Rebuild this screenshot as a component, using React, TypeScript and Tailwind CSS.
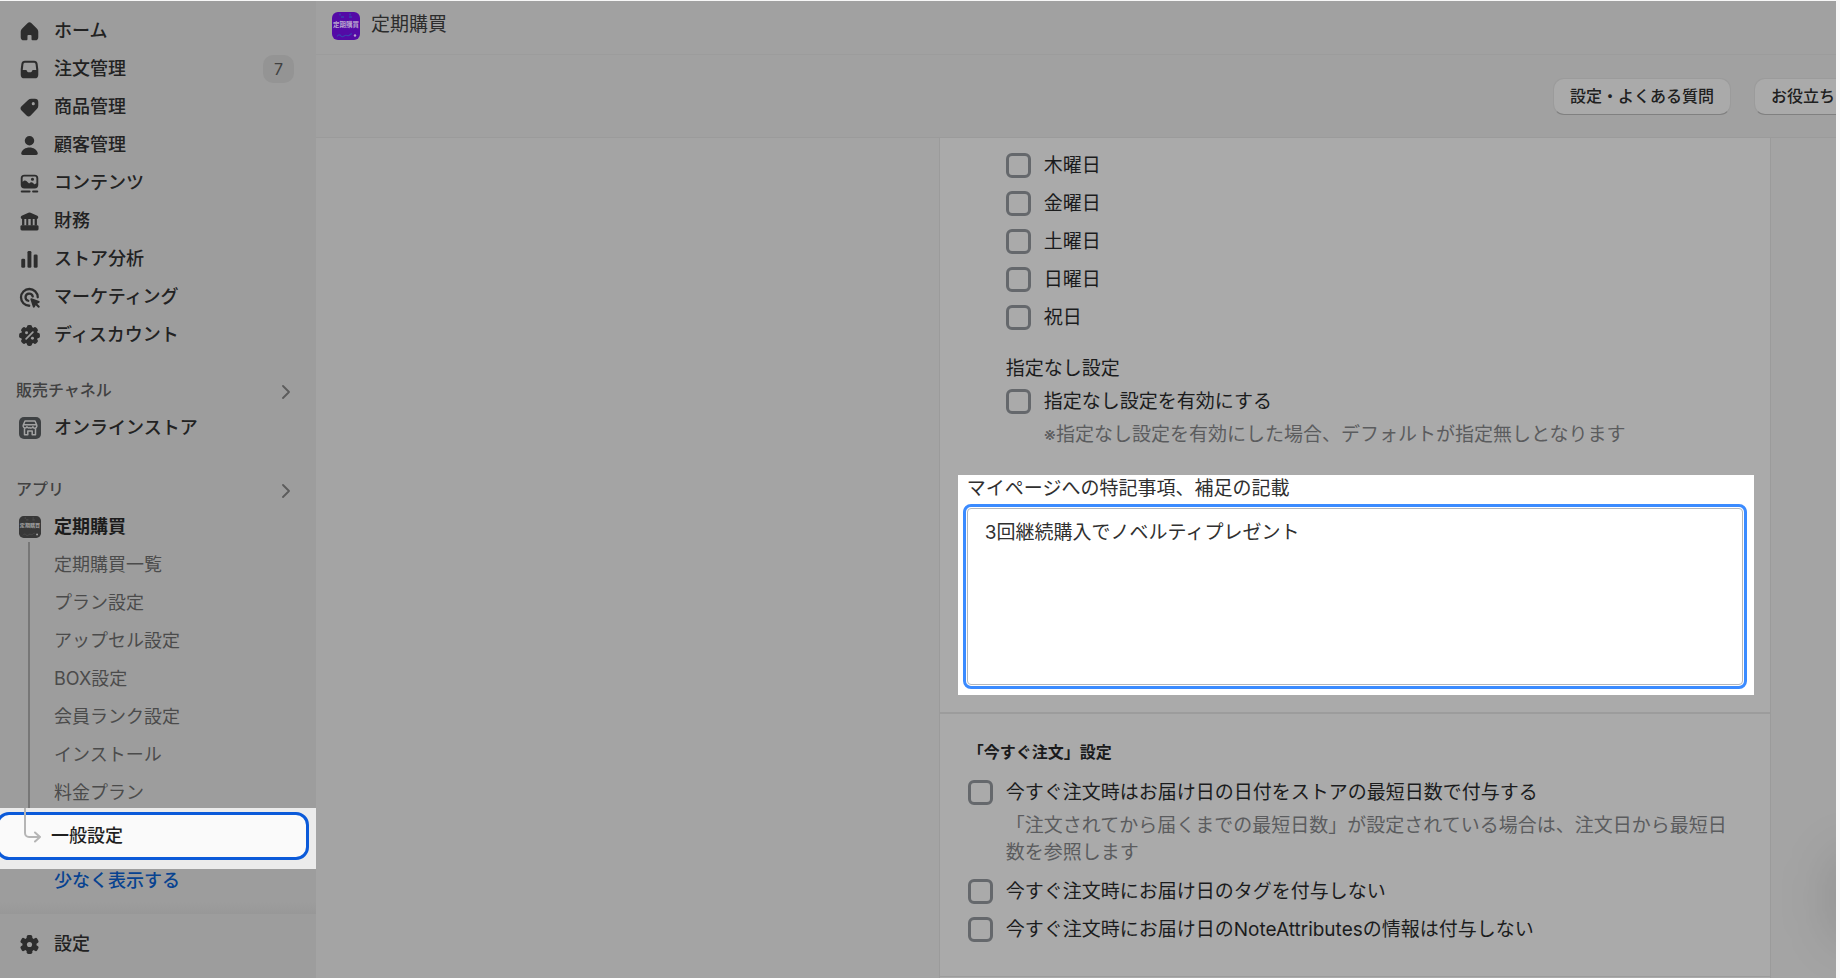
import { useState } from "react";
import type { ReactNode } from "react";

interface NavItem {
  label: string;
  icon: ReactNode;
  badge?: number;
}

function Icon({ children }: { children: ReactNode }) {
  return (
    <svg viewBox="0 0 20 20" className="w-[27px] h-[27px] shrink-0 text-[#2d2d2d]" fill="currentColor" aria-hidden="true">
      {children}
    </svg>
  );
}

const bumps = [0, 45, 90, 135, 180, 225, 270, 315];
const teeth = [0, 60, 120, 180, 240, 300];

const navItems: NavItem[] = [
  {
    label: "ホーム",
    icon: (
      <Icon>
        <path d="M8.5 3.9a2.2 2.2 0 0 1 3 0l3.9 3.8c.8.8 1.1 1.6 1.1 2.6v3.9a2.3 2.3 0 0 1-2.3 2.3h-2a.7.7 0 0 1-.7-.7v-2.6a.7.7 0 0 0-.7-.7H9.2a.7.7 0 0 0-.7.7v2.6a.7.7 0 0 1-.7.7h-2a2.3 2.3 0 0 1-2.3-2.3v-3.9c0-1 .3-1.8 1.1-2.6z" />
      </Icon>
    ),
  },
  {
    label: "注文管理",
    badge: 7,
    icon: (
      <Icon>
        <path
          fillRule="evenodd"
          d="M6.7 3.5h6.6a2.7 2.7 0 0 1 2.7 2.3l.5 4v4a2.7 2.7 0 0 1-2.7 2.7H6.2a2.7 2.7 0 0 1-2.7-2.7v-4l.5-4a2.7 2.7 0 0 1 2.7-2.3zm.1 1.5c-.7 0-1.2.4-1.3 1.1L5 10.3h2.3c.4 0 .7.3.8.6l.2.5c.1.4.4.6.8.6h1.8c.4 0 .7-.2.8-.6l.2-.5c.1-.3.4-.6.8-.6H15l-.5-4.2c-.1-.7-.6-1.1-1.3-1.1z"
        />
      </Icon>
    ),
  },
  {
    label: "商品管理",
    icon: (
      <Icon>
        <path
          fillRule="evenodd"
          d="M11.4 3.5h2.6a2.5 2.5 0 0 1 2.5 2.5v2.7c0 .9-.3 1.7-.9 2.3l-4.7 4.9a2.2 2.2 0 0 1-3.1 0l-3.7-3.7a2.2 2.2 0 0 1 0-3.1l4.9-4.7c.7-.6 1.5-.9 2.4-.9zm1.4 4.8a1.15 1.15 0 1 0 0-2.3 1.15 1.15 0 0 0 0 2.3z"
        />
      </Icon>
    ),
  },
  {
    label: "顧客管理",
    icon: (
      <Icon>
        <circle cx="10" cy="6.5" r="3.5" />
        <path d="M3.9 15.6c.7-2.5 3.1-4.1 6.1-4.1s5.4 1.6 6.1 4.1c.2.8-.4 1.5-1.2 1.5H5.1c-.8 0-1.4-.7-1.2-1.5z" />
      </Icon>
    ),
  },
  {
    label: "コンテンツ",
    icon: (
      <Icon>
        <path
          fillRule="evenodd"
          d="M6.2 3.5h7.6a2.7 2.7 0 0 1 2.7 2.7v4.8a2.7 2.7 0 0 1-2.7 2.7H6.2a2.7 2.7 0 0 1-2.7-2.7V6.2a2.7 2.7 0 0 1 2.7-2.7zm0 1.4c-.8 0-1.3.5-1.3 1.3v2.5l1-.7c.6-.4 1.3-.3 1.8.1l2 1.9 1-.7c.5-.4 1.2-.3 1.7.1l1 .9c.4.3 1 .2 1.7-.4V6.2c0-.8-.5-1.3-1.3-1.3zm6 3.1a1.15 1.15 0 1 0 0-2.3 1.15 1.15 0 0 0 0 2.3z"
        />
        <rect x="3.5" y="15.1" width="7.3" height="1.5" rx=".75" />
        <rect x="11.9" y="15.1" width="4.6" height="1.5" rx=".75" />
      </Icon>
    ),
  },
  {
    label: "財務",
    icon: (
      <Icon>
        <path d="M9.2 3.5a1.7 1.7 0 0 1 1.6 0l5 2.3c1 .5.9 2.3-.3 2.3h-11c-1.2 0-1.3-1.8-.3-2.3z" />
        <path d="M4.5 8h1.7v5H4.5zM7.6 8h1.5v5H7.6zM10.9 8h1.5v5h-1.5zM13.8 8h1.7v5h-1.7z" />
        <rect x="3.3" y="12.7" width="13.4" height="3.9" rx="1" />
      </Icon>
    ),
  },
  {
    label: "ストア分析",
    icon: (
      <Icon>
        <rect x="3.9" y="9.4" width="2.9" height="6.7" rx="1" />
        <rect x="8.5" y="3.7" width="2.9" height="12.4" rx="1" />
        <rect x="13.1" y="6.3" width="2.9" height="9.8" rx="1" />
      </Icon>
    ),
  },
  {
    label: "マーケティング",
    icon: (
      <Icon>
        <g fill="none" stroke="currentColor" strokeWidth="1.7" strokeLinecap="round">
          <path d="M16.1 9.8a6.2 6.2 0 1 0-6.3 6.3" />
          <path d="M12.4 9.2a2.7 2.7 0 1 0-3.3 3.2" />
        </g>
        <path d="M10.7 11.5c-.2-.6.3-1.1.9-.9l5.5 1.9c.6.2.6 1 .1 1.3l-1.5.8 1.7 1.7c.7.7-.4 1.8-1.1 1.1l-1.7-1.7-.8 1.5c-.3.5-1.1.5-1.3-.1z" />
      </Icon>
    ),
  },
  {
    label: "ディスカウント",
    icon: (
      <Icon>
        <circle cx="10" cy="10" r="6.3" />
        {bumps.map((a) => (
          <rect key={a} x="8" y="2.3" width="4" height="4" rx="1.5" transform={`rotate(${a} 10 10)`} />
        ))}
        <g className="text-[#9d9d9d]" fill="currentColor">
          <path d="M7.5 12.5l5-5" stroke="currentColor" strokeWidth="1.3" strokeLinecap="round" />
          <circle cx="7.8" cy="7.9" r="1.1" />
          <circle cx="12.2" cy="12.1" r="1.1" />
        </g>
      </Icon>
    ),
  },
];

const appLinks = ["定期購買一覧", "プラン設定", "アップセル設定", "BOX設定", "会員ランク設定", "インストール", "料金プラン"];
const weekdays = ["木曜日", "金曜日", "土曜日", "日曜日", "祝日"];

function NavLink({ icon, label, badge, strong }: NavItem & { strong?: boolean }) {
  return (
    <a href="#" className="flex h-[38px] items-center gap-[11px] pl-4 pr-[22px] text-lg">
      {icon}
      <span className={strong ? "flex-1 font-bold text-[#1c1c1c]" : "flex-1 font-medium text-[#222]"}>{label}</span>
      {badge && (
        <span className="flex h-7 w-[31px] items-center justify-center rounded-[10px] bg-[#949494] text-base text-[#404040]">
          {badge}
        </span>
      )}
    </a>
  );
}

function NavHeading({ label }: { label: string }) {
  return (
    <button type="button" className="flex h-[38px] w-full items-center justify-between pl-4 pr-[26px] text-base font-medium text-[#414141]">
      {label}
      <svg viewBox="0 0 8 14" className="mt-1 h-[14px] w-2" fill="none" stroke="#5c5c5c" strokeWidth="1.8" strokeLinecap="round" strokeLinejoin="round" aria-hidden="true">
        <path d="M1 1l6 6-6 6" />
      </svg>
    </button>
  );
}

function StoreIcon() {
  return (
    <span className="flex w-[27px] shrink-0 justify-center">
      <svg viewBox="0 0 22 22" className="h-[22px] w-[22px]" aria-hidden="true">
        <rect width="22" height="22" rx="5" fill="#3e4143" />
        <g fill="none" stroke="#a3a3a3" strokeWidth="1.5" strokeLinejoin="round" strokeLinecap="round">
          <path d="M6 4h10l1.8 4.2v1.2a2 2 0 0 1-3.9.3 2 2 0 0 1-3 .9 2 2 0 0 1-2.9-.9 2 2 0 0 1-3.8-.3V8.2z" />
          <path d="M4.8 7.8h12.6M5.5 11.8v5.9h3.3v-3.6h4.4v3.6h3.3v-5.9" />
        </g>
      </svg>
    </span>
  );
}

function AppLogo({ color, ink, wave, className }: { color: string; ink: string; wave: string; className: string }) {
  return (
    <svg viewBox="0 0 28 28" className={className} aria-hidden="true">
      <rect width="28" height="28" rx="6" fill={color} />
      <text x="14" y="14.5" textAnchor="middle" fontSize="6.5" fontWeight="700" fill={ink} fontFamily="Noto Sans CJK JP">
        定期購買
      </text>
      <path d="M5 24.5c1.5-2 3-2 4-.5s2.5.5 4-.5 2.5.8 4 0 1.5-2 3-1.5" fill="none" stroke={wave} strokeWidth="1.2" />
      <path d="M8 1.500v2M18 1.500v2M9 5h3M17 5h3" stroke={wave} strokeWidth="1.5" />
      <circle cx="23" cy="23.5" r="1.2" fill={ink} />
    </svg>
  );
}

function Checkbox({ id, label, help }: { id: string; label: string; help?: string }) {
  const [checked, setChecked] = useState(false);

  return (
    <div className="flex gap-[13px]">
      <input
        id={id}
        type="checkbox"
        checked={checked}
        onChange={(e) => setChecked(e.target.checked)}
        className="mt-[6px] h-[25px] w-[25px] shrink-0 appearance-none rounded-[6px] border-[3px] border-[#65686c] checked:bg-[#65686c]"
      />
      <div>
        <label htmlFor={id} className="block py-[5px] text-[19px] leading-7 text-[#1b1c1d]">
          {label}
        </label>
        {help && <p className="text-[19px] leading-[27px] text-[#5b5c5e]">{help}</p>}
      </div>
    </div>
  );
}

function Sidebar() {
  return (
    <nav className="flex w-[316px] shrink-0 flex-col overflow-hidden bg-[#9d9d9d] pt-[11px]">
      {navItems.map((item) => (
        <NavLink key={item.label} {...item} />
      ))}

      <div className="mt-[17px]">
        <NavHeading label="販売チャネル" />
        <NavLink icon={<StoreIcon />} label="オンラインストア" />
      </div>

      <div className="mt-[23px]">
        <NavHeading label="アプリ" />
        <NavLink
          strong
          label="定期購買"
          icon={
            <span className="flex w-[27px] shrink-0 justify-center">
              <AppLogo color="#383838" ink="#a6a6a6" wave="#4d4d4d" className="h-[22px] w-[22px]" />
            </span>
          }
        />
        <ul className="-mt-1 ml-7 border-l-2 border-[#777] pt-1">
          {appLinks.map((label) => (
            <li key={label}>
              <a href="#" className="flex h-[38px] items-center pl-6 text-lg text-[#4b4b4b]">
                {label}
              </a>
            </li>
          ))}
        </ul>
      </div>

      {/* Current page */}
      <div className="relative -mt-1 bg-[#ebebeb] pt-1 pb-[9px]">
        <a
          href="#"
          aria-current="page"
          className="-ml-1 mr-[7px] flex h-12 items-center rounded-[13px] border-[3px] border-[#0b5ad9] bg-[#fafafa] pl-[52px] text-lg font-medium text-[#1f1f1f]"
        >
          一般設定
        </a>
        <svg viewBox="0 0 20 36" className="absolute left-6 top-0 h-9 w-5" fill="none" stroke="#b5b5b5" strokeWidth="2" strokeLinecap="round" strokeLinejoin="round" aria-hidden="true">
          <path d="M1 0v25a4 4 0 0 0 4 4h11M11 24.5l5 4.5-5 4.5" />
        </svg>
      </div>
      <a href="#" className="flex h-6 items-center pl-[54px] text-lg font-medium text-[#074290]">
        少なく表示する
      </a>

      <div className="mt-auto">
        <div className="h-3 bg-linear-to-b from-[#9d9d9d] to-[#989898]" />
        <div className="pt-[11px] pb-[15px]">
          <NavLink
            label="設定"
            icon={
              <Icon>
                <circle cx="10" cy="10" r="5.2" />
                {teeth.map((a) => (
                  <rect key={a} x="7.9" y="2.9" width="4.2" height="4.5" rx="1.3" transform={`rotate(${a} 10 10)`} />
                ))}
                <circle cx="10" cy="10" r="1.9" fill="#9d9d9d" />
              </Icon>
            }
          />
        </div>
      </div>
    </nav>
  );
}

export default function App() {
  const [note, setNote] = useState("3回継続購入でノベルティプレゼント");

  return (
    <div className="flex min-h-screen bg-[#f7f7f7] pr-1 pt-px font-[Inter,'Noto_Sans_CJK_JP',sans-serif]">
      <Sidebar />

      <main className="relative flex min-w-0 flex-1 flex-col overflow-hidden bg-[#a4a4a4]">
        <header className="flex h-[54px] items-center gap-[11px] border-b border-[#9c9c9c] bg-[#a1a1a1] pb-1 pl-4">
          <AppLogo color="#540aa6" ink="#b9a6cf" wave="#3a3fb0" className="h-7 w-7" />
          <h1 className="text-[19px] text-[#2c2c2c]">定期購買</h1>
        </header>

        <div className="flex h-[83px] items-center justify-end gap-[23px] border-b border-[#9b9b9b] bg-[#a1a1a1]">
          <button type="button" className="h-[37px] shrink-0 rounded-[11px] border border-[#9b9b9b] border-b-[#808080] bg-[#aaa] px-4 text-base font-medium text-[#202020]">
            設定・よくある質問
          </button>
          <button type="button" className="-mr-4 h-[37px] shrink-0 rounded-[11px] border border-[#9b9b9b] border-b-[#808080] bg-[#aaa] px-4 text-base font-medium text-[#202020]">
            お役立ち
          </button>
        </div>

        <div className="grid flex-1 grid-cols-[2fr_3fr] pl-[68px] pr-[65px]">
          <div />
          <div className="border-x border-[#9b9b9b] bg-[#aaa]">
            <section className="border-b-2 border-[#9c9c9c] pb-[17px] pl-[18px] pr-4 pt-[9px]">
              <div className="pl-12">
                {weekdays.map((day, i) => (
                  <Checkbox key={day} id={`day-${i}`} label={day} />
                ))}
                <h2 className="mt-[18px] text-[19px] leading-7 text-[#1b1c1d]">指定なし設定</h2>
                <Checkbox
                  id="no-date"
                  label="指定なし設定を有効にする"
                  help="※指定なし設定を有効にした場合、デフォルトが指定無しとなります"
                />
              </div>

              <div className="mt-[27px] bg-white pb-[10px] pl-[9px] pr-[11px]">
                <label htmlFor="note" className="block text-[19px] leading-7 text-[#303030]">
                  マイページへの特記事項、補足の記載
                </label>
                <textarea
                  id="note"
                  value={note}
                  onChange={(e) => setNote(e.target.value)}
                  className="mt-[5px] block h-[177px] w-full resize-none rounded-[4px] border border-[#b4b7bb] bg-white px-[17px] py-[10px] text-[19px] leading-7 text-[#303030] outline-3 outline-offset-1 outline-[#3b8bff]"
                />
              </div>
            </section>

            <section className="border-b border-[#9c9c9c] px-7 pb-[27px] pt-6">
              <h2 className="mb-2 text-base leading-7 font-bold text-[#1a1b1c]">「今すぐ注文」設定</h2>
              <Checkbox
                id="order-date"
                label="今すぐ注文時はお届け日の日付をストアの最短日数で付与する"
                help="「注文されてから届くまでの最短日数」が設定されている場合は、注文日から最短日数を参照します"
              />
              <div className="mt-[7px]">
                <Checkbox id="order-tag" label="今すぐ注文時にお届け日のタグを付与しない" />
                <Checkbox id="order-attr" label="今すぐ注文時にお届け日のNoteAttributesの情報は付与しない" />
              </div>
            </section>
          </div>
        </div>

        {/* Shadow of the chat launcher beyond the edge */}
        <div className="pointer-events-none absolute -right-12 bottom-8 h-24 w-14 rounded-full bg-black/10 blur-xl" />
      </main>
    </div>
  );
}
